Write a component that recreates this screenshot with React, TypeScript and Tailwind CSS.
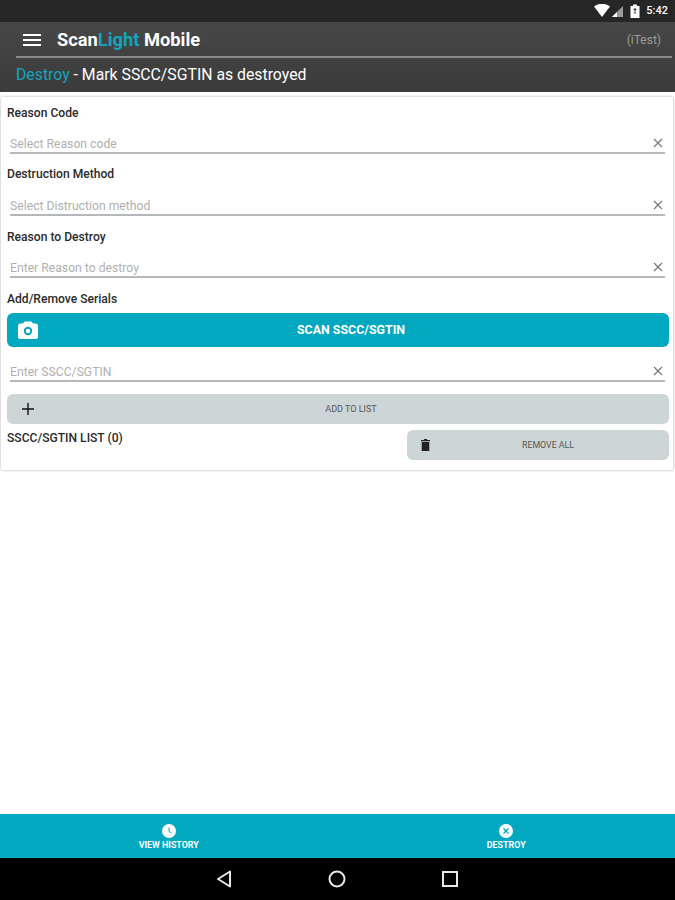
import React from "react";

function ClearIcon() {
  return (
    <svg width="10" height="10" viewBox="0 0 10 10" className="shrink-0 text-[#777]">
      <path d="M1 1L9 9M9 1L1 9" stroke="currentColor" strokeWidth="1.2" />
    </svg>
  );
}

function Field({ placeholder }: { placeholder: string }) {
  return (
    <div className="ml-[3px] mr-[4px] flex h-[22px] items-end justify-between border-b-2 border-[#b5b8b8] pb-[1px]">
      <span className="text-[12.2px] leading-[14px] text-[#b0b0b0]">{placeholder}</span>
      <span className="mb-[3px] mr-[2px]"><ClearIcon /></span>
    </div>
  );
}

function Label({ children, className = "" }: { children: React.ReactNode; className?: string }) {
  return <div className={`text-[12.1px] leading-[14px] font-medium text-[#2a2a2a] ${className}`}>{children}</div>;
}

export default function App() {
  return (
    <div className="flex h-[900px] w-[675px] flex-col bg-white font-['Roboto',sans-serif]">
      <div className="flex h-[22px] items-center justify-end gap-[6px] bg-[#262626] pr-[7px]">
        <svg width="30" height="14" viewBox="0 0 30 14">
          <path d="M0 2.5C5 -1 11 -1 16 2.5L8 13Z" fill="#fff" />
          <path d="M29 2V13H18Z" fill="#9a9a9a" />
          <path d="M23 8V13H18Z" fill="#fff" />
        </svg>
        <svg width="10" height="14" viewBox="0 0 10 14">
          <path d="M3 0.5H7V2H9.5V14H0.5V2H3Z" fill="#fff" />
          <path d="M5 4V10M3.5 5.5H6.5" stroke="#333" strokeWidth="1" />
        </svg>
        <span className="text-[11px] font-medium text-white">5:42</span>
      </div>

      <div className="flex h-[70px] flex-col bg-gradient-to-b from-[#474747] to-[#3b3b3b] pl-[16px] pr-[3px]">
        <div className="flex h-[36px] items-center border-b-2 border-[#8a8a8a]">
          <svg width="18" height="14" viewBox="0 0 18 14" className="ml-[7px] mt-[2px]">
            <path d="M0 2H18M0 7H18M0 12H18" stroke="#fff" strokeWidth="2" />
          </svg>
          <span className="ml-[16px] mt-[2px] text-[18.3px] font-bold text-white">
            Scan<span className="text-[#13a5bd]">Light</span> Mobile
          </span>
          <span className="ml-auto mr-[11px] mt-[2px] text-[12px] text-[#9c9c9c]">(iTest)</span>
        </div>
        <div className="flex flex-1 items-center pb-[1px] text-[15.8px] text-white">
          <span className="text-[#13a5bd]">Destroy</span>
          <span>&nbsp;- Mark SSCC/SGTIN as destroyed</span>
        </div>
      </div>

      <div className="ml-px mr-[2px] mt-[5px] h-[373px] rounded-[2px] bg-white pl-[6px] pr-[4px] pt-[9px] shadow-[0_0_3px_rgba(0,0,0,0.35)]">
        <Label>Reason Code</Label>
        <div className="h-[12px]" />
        <Field placeholder="Select Reason code" />
        <Label className="mt-[13px]">Destruction Method</Label>
        <div className="h-[13px]" />
        <Field placeholder="Select Distruction method" />
        <Label className="mt-[14px]">Reason to Destroy</Label>
        <div className="h-[12px]" />
        <Field placeholder="Enter Reason to destroy" />
        <Label className="mt-[14px]">Add/Remove Serials</Label>
        <div className="relative mt-[7px] flex h-[34px] items-center justify-center rounded-[6px] bg-[#02a8c0] pl-[26px]">
          <svg width="20" height="18" viewBox="0 0 20 18" className="absolute left-[11px]">
            <path d="M6.5 0.5H13.5L15 2.5H18C19 2.5 20 3.5 20 4.5V16C20 17 19 18 18 18H2C1 18 0 17 0 16V4.5C0 3.5 1 2.5 2 2.5H5Z" fill="#fff" />
            <circle cx="10" cy="10" r="3.2" fill="none" stroke="#02a8c0" strokeWidth="2" />
          </svg>
          <span className="text-[12.4px] font-bold text-white">SCAN SSCC/SGTIN</span>
        </div>
        <div className="h-[13px]" />
        <Field placeholder="Enter SSCC/SGTIN" />
        <div className="relative mt-[12px] flex h-[30px] items-center justify-center rounded-[6px] bg-[#cdd6d6] pl-[26px] pt-[2px]">
          <svg width="12" height="12" viewBox="0 0 12 12" className="absolute left-[15px] top-[9px]">
            <path d="M6 0V12M0 6H12" stroke="#111" strokeWidth="1.4" />
          </svg>
          <span className="text-[9px] text-[#555]">ADD TO LIST</span>
        </div>
        <div className="mt-[6px] flex items-start justify-between">
          <Label className="mt-[1px]">SSCC/SGTIN LIST (0)</Label>
          <div className="relative flex h-[30px] w-[262px] items-center justify-center rounded-[6px] bg-[#cdd6d6] pl-[20px] pt-[2px]">
            <svg width="9" height="12" viewBox="0 0 9 12" className="absolute left-[14px] top-[9px]">
              <path d="M3 0H6V1H9V2.2H0V1H3ZM0.7 3H8.3V12H0.7Z" fill="#222" />
            </svg>
            <span className="text-[8.8px] text-[#555]">REMOVE ALL</span>
          </div>
        </div>
      </div>

      <div className="flex-1" />

      <div className="flex h-[44px] bg-[#02a8c0]">
        <div className="flex flex-1 flex-col items-center pt-[10px]">
          <svg width="14" height="14" viewBox="0 0 14 14">
            <circle cx="7" cy="7" r="7" fill="#fff" />
            <path d="M7 3.5V7.5L9.5 9" stroke="#02a8c0" strokeWidth="1" fill="none" />
          </svg>
          <span className="mt-[2px] text-[8.9px] leading-[11px] font-bold text-white">VIEW HISTORY</span>
        </div>
        <div className="flex flex-1 flex-col items-center pt-[10px]">
          <svg width="14" height="14" viewBox="0 0 14 14">
            <circle cx="7" cy="7" r="7" fill="#fff" />
            <path d="M4.5 4.5L9.5 9.5M9.5 4.5L4.5 9.5" stroke="#02a8c0" strokeWidth="1.4" />
          </svg>
          <span className="mt-[2px] text-[8.9px] leading-[11px] font-bold text-white">DESTROY</span>
        </div>
      </div>

      <div className="flex h-[42px] items-center justify-center gap-[96px] bg-black">
        <svg width="16" height="18" viewBox="0 0 16 18" className="-ml-[1px]">
          <path d="M14 1.5V16.5L2 9Z" fill="none" stroke="#e8e8e8" strokeWidth="2" strokeLinejoin="round" />
        </svg>
        <svg width="18" height="18" viewBox="0 0 18 18">
          <circle cx="9" cy="9" r="7.5" fill="none" stroke="#e8e8e8" strokeWidth="2" />
        </svg>
        <svg width="16" height="16" viewBox="0 0 16 16">
          <rect x="1" y="1" width="14" height="14" fill="none" stroke="#e8e8e8" strokeWidth="2" />
        </svg>
      </div>
    </div>
  );
}
